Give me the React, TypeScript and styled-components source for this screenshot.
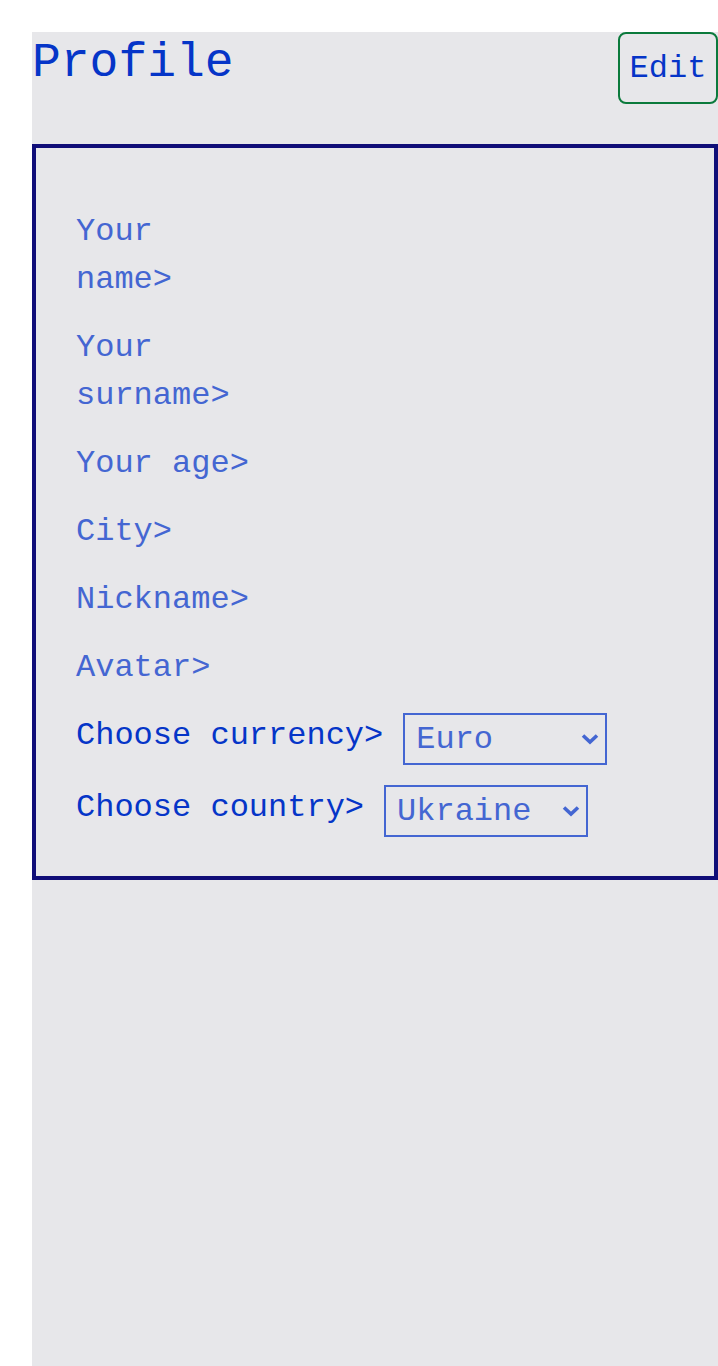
import React from "react";
import styled, { createGlobalStyle } from "styled-components";

const GlobalStyle = createGlobalStyle`
  html, body { background: #ffffff; }
  body {
    margin: 32px 0 0 32px;
    font-family: "Liberation Mono", "Courier New", monospace;
  }
`;

const Page = styled.div`
  background: #e7e7ea;
  min-height: calc(100vh - 32px);
`;

const Header = styled.header`
  display: flex;
  justify-content: space-between;
  align-items: flex-start;
`;

const Title = styled.h1`
  margin: 0;
  font-family: "Liberation Mono", "Courier New", monospace;
  font-weight: 400;
  font-size: 48px;
  line-height: 62px;
  color: #0535c8;
`;

const EditButton = styled.button`
  box-sizing: border-box;
  width: 100px;
  height: 72px;
  padding: 0;
  border: 2px solid #0b7a3c;
  border-radius: 8px;
  background: transparent;
  font-family: "Liberation Mono", "Courier New", monospace;
  font-size: 32px;
  color: #0535c8;
  cursor: pointer;
`;

const Card = styled.section`
  margin-top: 40px;
  border: 4px solid #100e78;
  padding: 60px 40px 39px;
  display: flex;
  flex-direction: column;
  gap: 20px;
`;

const Field = styled.div`
  max-width: 180px;
  font-size: 32px;
  line-height: 48px;
  color: #4466d2;
`;

const ChoiceGroup = styled.div`
  display: flex;
  flex-direction: column;
  gap: 20px;
  padding-top: 1px;
`;

const ChoiceRow = styled.label`
  display: flex;
  align-items: flex-start;
  gap: 20px;
  font-size: 32px;
  line-height: 46px;
  color: #0535c8;
`;

const SelectWrap = styled.span`
  position: relative;
  display: inline-flex;
`;

const Select = styled.select`
  box-sizing: border-box;
  width: 204px;
  height: 52px;
  appearance: none;
  -webkit-appearance: none;
  border: 2px solid #4466d2;
  border-radius: 0;
  background: transparent;
  color: #4466d2;
  font-family: "Liberation Mono", "Courier New", monospace;
  font-size: 32px;
  padding: 0 30px 0 11px;
  outline: none;
`;

const Chevron = styled.svg`
  position: absolute;
  right: 8px;
  top: 50%;
  transform: translateY(-50%);
  width: 18px;
  height: 12px;
  pointer-events: none;
`;

const ChevronIcon = () => (
  <Chevron viewBox="0 0 18 12" aria-hidden="true">
    <polyline
      points="2,2.5 9,9 16,2.5"
      fill="none"
      stroke="#4466d2"
      strokeWidth="3.6"
      strokeLinejoin="miter"
      strokeLinecap="butt"
    />
  </Chevron>
);

const fields = ["Your name>", "Your surname>", "Your age>", "City>", "Nickname>", "Avatar>"];

export default function App() {
  return (
    <>
      <GlobalStyle />
      <Page>
        <Header>
          <Title>Profile</Title>
          <EditButton>Edit</EditButton>
        </Header>
        <Card>
          {fields.map((f) => (
            <Field key={f}>{f}</Field>
          ))}
          <ChoiceGroup>
            <ChoiceRow>
              Choose currency&gt;
              <SelectWrap>
                <Select defaultValue="Euro">
                  <option>Euro</option>
                  <option>Dollar</option>
                  <option>Hryvnia</option>
                </Select>
                <ChevronIcon />
              </SelectWrap>
            </ChoiceRow>
            <ChoiceRow>
              Choose country&gt;
              <SelectWrap>
                <Select defaultValue="Ukraine">
                  <option>Ukraine</option>
                  <option>Poland</option>
                  <option>Germany</option>
                </Select>
                <ChevronIcon />
              </SelectWrap>
            </ChoiceRow>
          </ChoiceGroup>
        </Card>
      </Page>
    </>
  );
}
